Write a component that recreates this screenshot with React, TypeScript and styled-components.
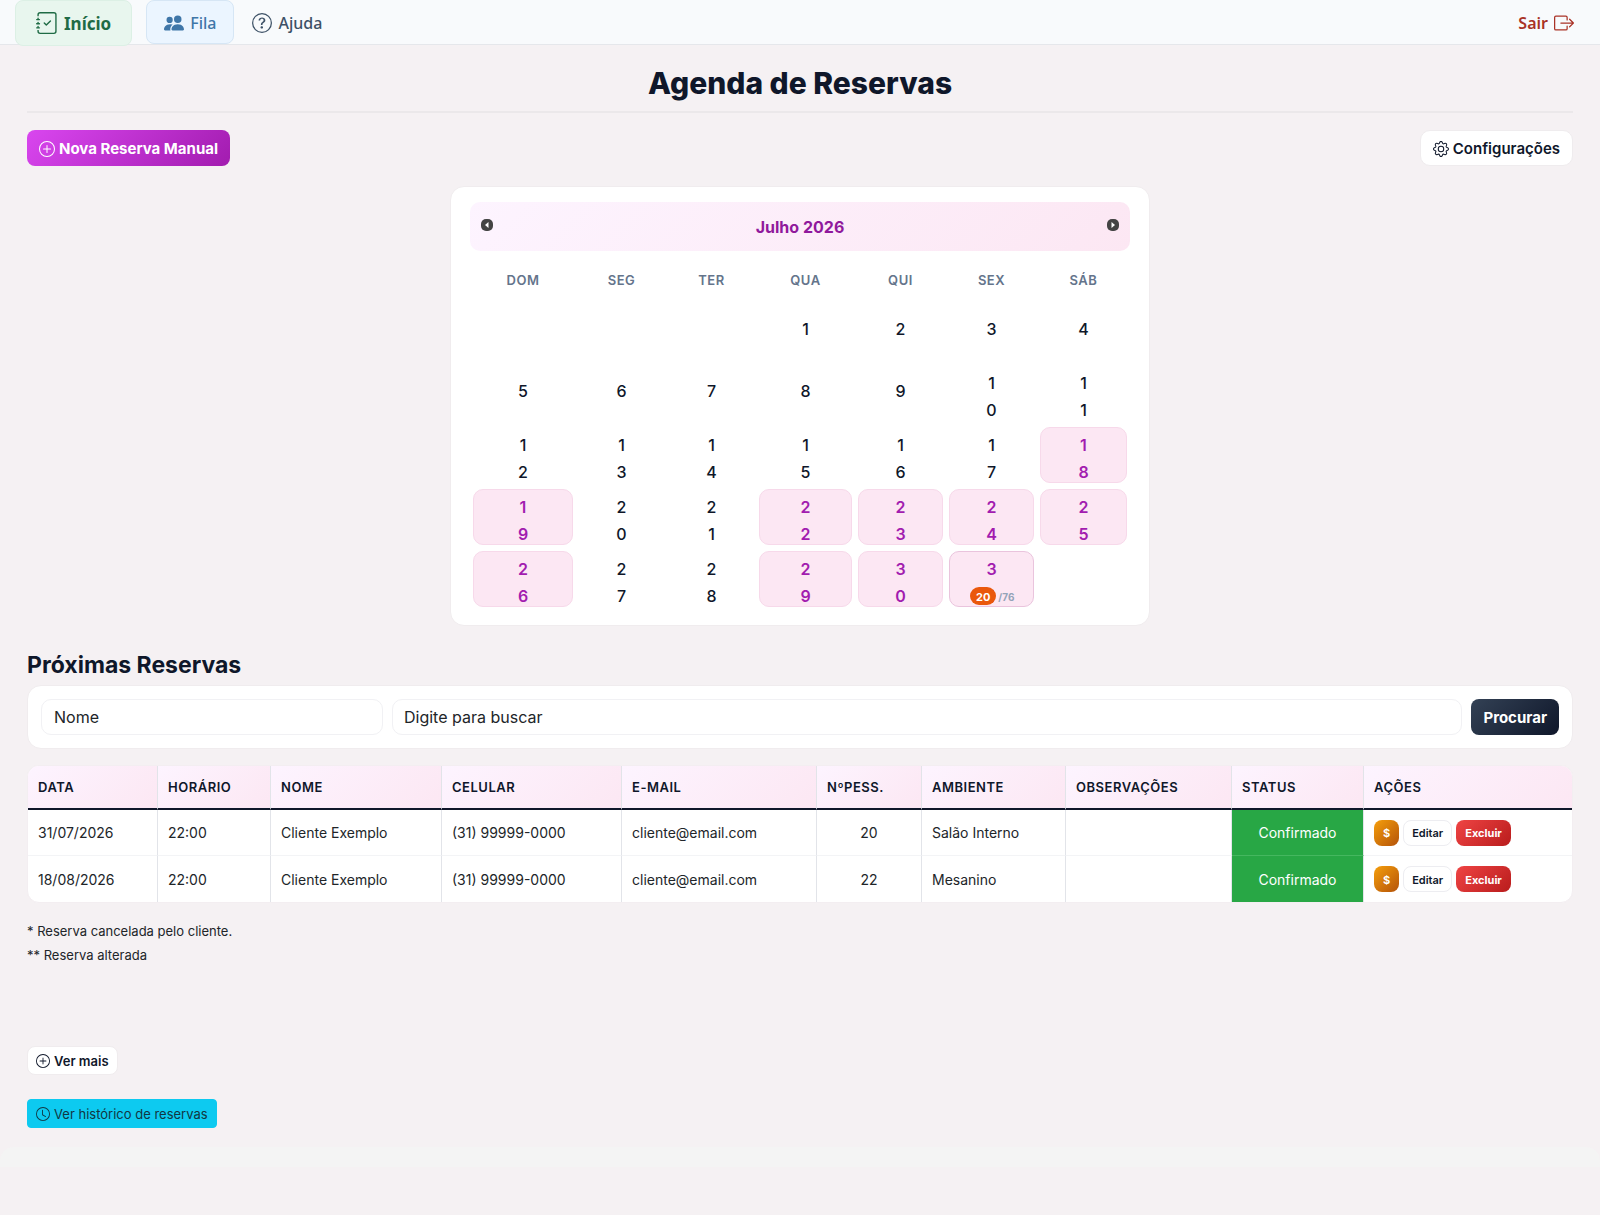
import React from "react";
import styled, { createGlobalStyle, css } from "styled-components";
import {
  BsJournalCheck,
  BsPeopleFill,
  BsQuestionCircle,
  BsBoxArrowRight,
  BsPlusCircle,
  BsGear,
  BsClock,
} from "react-icons/bs";

const GlobalStyle = createGlobalStyle`
  *, *::before, *::after { box-sizing: border-box; }
  body {
    margin: 0;
    background: #f5f1f3;
    color: #212529;
    font-family: Inter, "Liberation Sans", sans-serif;
    font-size: 16px;
  }
  button, input, select { font: inherit; }
  h1, h2, p { margin: 0; }
  svg { flex: none; }
`;

/* ---------- top navigation ---------- */

const Nav = styled.nav`
  display: flex;
  align-items: flex-start;
  height: 45px;
  padding: 0 26px 0 15px;
  background: #f8fafc;
  border-bottom: 1px solid #e5e7eb;
  font-family: "Noto Sans", "Open Sans", sans-serif;
`;

type LinkKind = "home" | "queue" | "plain" | "exit";

const linkKinds = {
  home: css`
    height: 46px;
    padding: 0 20px;
    margin-right: 14px;
    background: #e8f6ee;
    border: 1px solid #dcf0e5;
    border-radius: 8px;
    color: #1f6b45;
    font-size: 17px;
    font-weight: 700;
  `,
  queue: css`
    padding: 1px 17px 0;
    margin-right: 18px;
    background: #ebf5ff;
    border: 1px solid #d6e6f5;
    border-radius: 8px;
    color: #3f76a8;
  `,
  plain: css`
    color: #3d5166;
  `,
  exit: css`
    margin-left: auto;
    color: #a93226;
    font-weight: 600;
  `,
};

const NavLink = styled.a<{ $kind: LinkKind }>`
  display: flex;
  align-items: center;
  gap: 6px;
  height: 44px;
  padding-top: 1px;
  font-size: 16px;
  font-weight: 500;
  text-decoration: none;
  ${(p) => linkKinds[p.$kind]}
`;

/* ---------- page ---------- */

const Main = styled.main`
  padding: 0 27px;
`;

const Title = styled.h1`
  padding: 18px 0 8px;
  border-bottom: 2px solid #ebe8ea;
  color: #0f172a;
  font-size: 30px;
  line-height: 40px;
  font-weight: 800;
  text-align: center;
`;

const Toolbar = styled.div`
  display: flex;
  justify-content: space-between;
  margin: 17px 0 20px;
`;

const Button = styled.button<{ $tone: "primary" | "light" | "dark" }>`
  display: inline-flex;
  align-items: center;
  gap: 4px;
  height: 36px;
  padding: 1px 12px 0;
  border: 0;
  border-radius: 8px;
  font-size: 15px;
  font-weight: 700;
  white-space: nowrap;
  cursor: pointer;
  ${(p) =>
    p.$tone === "primary" &&
    css`
      background: linear-gradient(135deg, #d946ef, #a21caf);
      color: #fff;
    `}
  ${(p) =>
    p.$tone === "light" &&
    css`
      background: #fff;
      border: 1px solid #efecee;
      border-radius: 10px;
      color: #0f172a;
      font-weight: 600;
    `}
  ${(p) =>
    p.$tone === "dark" &&
    css`
      background: linear-gradient(135deg, #334155, #0f172a);
      color: #fff;
    `}
`;

/* ---------- calendar ---------- */

const CalendarCard = styled.section`
  width: 100%;
  max-width: 700px;
  margin: 0 auto;
  padding: 15px 19px;
  background: #fff;
  border: 1px solid #f0ecee;
  border-radius: 14px;
`;

const CalendarHeader = styled.header`
  display: flex;
  align-items: center;
  justify-content: space-between;
  height: 49px;
  padding: 0 10px;
  border-radius: 10px;
  background: linear-gradient(135deg, #fdf4ff, #fce7f3);
`;

const Month = styled.div`
  color: #90199c;
  font-size: 16px;
  line-height: 24px;
  font-weight: 700;
`;

const ArrowButton = styled.button`
  display: flex;
  padding: 0 0 4px;
  border: 0;
  background: none;
  cursor: pointer;
`;

const DayTable = styled.table`
  width: 100%;
  table-layout: fixed;
  border-collapse: collapse;

  th {
    height: 49px;
    padding: 8px 0 0;
    color: #64748b;
    font-size: 13px;
    line-height: 20px;
    font-weight: 600;
    letter-spacing: 0.04em;
    text-transform: uppercase;
  }
  td {
    height: 62px;
    padding: 3px;
  }
`;

const Day = styled.button<{ $twoLines: boolean; $today: boolean }>`
  position: relative;
  display: flex;
  justify-content: center;
  align-items: ${(p) => (p.$twoLines ? "flex-start" : "center")};
  width: 100%;
  height: 56px;
  padding: ${(p) => (p.$twoLines ? "4px 0 0" : "0 0 4px")};
  border: 1px solid #f7d9ea;
  border-radius: 10px;
  background: #fce7f3;
  color: #a21caf;
  line-height: 27px;
  font-weight: 600;
  cursor: pointer;
  ${(p) =>
    p.$today &&
    css`
      border-color: #eac4dd;
    `}
  &:disabled {
    border-color: transparent;
    background: none;
    color: #0f172a;
    font-weight: 500;
    cursor: default;
  }
`;

const Digits = styled.span`
  width: 12px;
  word-break: break-all;
  text-align: center;
`;

const Occupancy = styled.span`
  position: absolute;
  left: 20px;
  bottom: 1px;
  display: flex;
  align-items: flex-end;
  gap: 2px;
  color: #94a3b8;
  font-size: 10px;
  line-height: 16px;
  font-weight: 700;
`;

const OccupancyCount = styled.span`
  height: 18px;
  padding: 2px 6px 0;
  border-radius: 9px;
  background: #ea580c;
  color: #fff;
  font-size: 11px;
`;

/* ---------- bookings ---------- */

const SectionTitle = styled.h2`
  margin: 24px 0 5px;
  color: #0f172a;
  font-size: 23px;
  line-height: 30px;
  font-weight: 700;
`;

const SearchCard = styled.form`
  display: flex;
  gap: 9px;
  padding: 13px;
  background: #fff;
  border: 1px solid #f0ecee;
  border-radius: 14px;
`;

const fieldStyle = css`
  height: 36px;
  padding: 0 12px;
  border: 1px solid #f1f1f4;
  border-radius: 10px;
  background: #fff;
  color: #212529;
  font-size: 16px;
`;

const FieldSelect = styled.select`
  ${fieldStyle}
  appearance: none;
  flex: 0 0 342px;
`;

const SearchInput = styled.input`
  ${fieldStyle}
  flex: 1;
  min-width: 0;
  padding: 0 11px;
  &::placeholder {
    color: #212529;
    opacity: 1;
  }
`;

const BookingTable = styled.table`
  width: 100%;
  margin: 16px 0;
  table-layout: fixed;
  border-collapse: separate;
  border-spacing: 0;
  border: 1px solid #f3eef1;
  border-radius: 12px;
  overflow: hidden;
  background: #fff;

  th,
  td {
    padding: 0 10px;
    border-right: 1px solid #e2e4e9;
    text-align: left;
    white-space: nowrap;
  }
  th:last-child,
  td:last-child {
    border-right: 0;
  }
  th {
    height: 44px;
    border-bottom: 2px solid #0f172a;
    background: linear-gradient(135deg, #fdf4ff, #fce7f3);
    color: #0f172a;
    font-size: 13px;
    font-weight: 600;
    letter-spacing: 0.04em;
    text-transform: uppercase;
  }
  td {
    height: 46px;
    border-bottom: 1px solid #f3f4f6;
    font-size: 14px;
  }
  tr:last-child td {
    border-bottom: 0;
  }
  td.people {
    text-align: center;
  }
  td.status {
    border-bottom-color: #45b75f;
    background: #28a745;
    color: #fff;
    text-align: center;
  }
`;

const Actions = styled.div`
  display: flex;
  align-items: center;
  gap: 4px;
`;

const SmallButton = styled.button<{ $tone: "amber" | "light" | "red" }>`
  height: 26px;
  padding: 1px 9px 0;
  border: 0;
  border-radius: 8px;
  color: #fff;
  font-size: 11px;
  font-weight: 700;
  cursor: pointer;
  background: ${(p) =>
    p.$tone === "amber"
      ? "linear-gradient(135deg, #f59e0b, #b45309)"
      : p.$tone === "red"
        ? "linear-gradient(135deg, #ef4444, #b91c1c)"
        : "#fff"};
  ${(p) =>
    p.$tone === "light" &&
    css`
      border: 1px solid #ededf1;
      padding: 1px 8px 0;
      color: #0f172a;
      font-weight: 600;
    `}
`;

const Note = styled.p`
  color: #212529;
  font-size: 13px;
  line-height: 24px;
`;

const Links = styled.div`
  display: flex;
  flex-direction: column;
  align-items: flex-start;
  gap: 24px;
  margin: 79px 0 19px;
`;

const MoreButton = styled.button<{ $info?: boolean }>`
  display: inline-flex;
  align-items: center;
  gap: 4px;
  height: 29px;
  padding: 0 8px;
  border: 1px solid #f0ecee;
  border-radius: 8px;
  background: #fff;
  color: #0f172a;
  font-size: 13px;
  font-weight: 600;
  cursor: pointer;
  ${(p) =>
    p.$info &&
    css`
      border-color: #0dcaf0;
      border-radius: 4px;
      background: #0dcaf0;
      color: #123642;
      font-weight: 400;
    `}
`;

const Footer = styled.footer`
  height: 20px;
  border-radius: 14px 14px 0 0;
  background: #f4f4f4;
`;

/* ---------- data ---------- */

const weekdays = ["Dom", "Seg", "Ter", "Qua", "Qui", "Sex", "Sáb"];
const weekdayWidths = [106, 91, 89, 99, 91, 91, 93];
const openDays = [18, 19, 22, 23, 24, 25, 26, 29, 30, 31];
const today = 31;
const weeks: (number | null)[][] = [
  [null, null, null, 1, 2, 3, 4],
  [5, 6, 7, 8, 9, 10, 11],
  [12, 13, 14, 15, 16, 17, 18],
  [19, 20, 21, 22, 23, 24, 25],
  [26, 27, 28, 29, 30, 31, null],
];

const columns: [string, number][] = [
  ["Data", 130],
  ["Horário", 113],
  ["Nome", 171],
  ["Celular", 180],
  ["E-mail", 195],
  ["NºPess.", 105],
  ["Ambiente", 144],
  ["Observações", 166],
  ["Status", 132],
  ["Ações", 208],
];

const bookings = [
  { date: "31/07/2026", people: 20, room: "Salão Interno" },
  { date: "18/08/2026", people: 22, room: "Mesanino" },
];

const Arrow = ({ left }: { left?: boolean }) => (
  <svg width="14" height="14" viewBox="0 0 14 14" aria-hidden="true">
    <rect x="1" y="1" width="12" height="12" rx="5" fill="#444" />
    <path d={left ? "M8.5 4v6L5 7z" : "M5.5 4v6L9 7z"} fill="#fff" />
  </svg>
);

export default function App() {
  return (
    <>
      <GlobalStyle />
      <Nav>
        <NavLink href="#inicio" $kind="home">
          <BsJournalCheck size={22} /> Início
        </NavLink>
        <NavLink href="#fila" $kind="queue">
          <BsPeopleFill size={20} /> Fila
        </NavLink>
        <NavLink href="#ajuda" $kind="plain">
          <BsQuestionCircle size={20} /> Ajuda
        </NavLink>
        <NavLink href="#sair" $kind="exit">
          Sair <BsBoxArrowRight size={20} />
        </NavLink>
      </Nav>
      <Main>
        <Title>Agenda de Reservas</Title>
        <Toolbar>
          <Button type="button" $tone="primary">
            <BsPlusCircle size={16} /> Nova Reserva Manual
          </Button>
          <Button type="button" $tone="light">
            <BsGear size={16} /> Configurações
          </Button>
        </Toolbar>

        <CalendarCard>
          <CalendarHeader>
            <ArrowButton type="button" aria-label="Mês anterior">
              <Arrow left />
            </ArrowButton>
            <Month>Julho 2026</Month>
            <ArrowButton type="button" aria-label="Próximo mês">
              <Arrow />
            </ArrowButton>
          </CalendarHeader>
          <DayTable>
            <colgroup>
              {weekdayWidths.map((w, i) => (
                <col key={i} width={w} />
              ))}
            </colgroup>
            <thead>
              <tr>
                {weekdays.map((d) => (
                  <th key={d} scope="col">{d}</th>
                ))}
              </tr>
            </thead>
            <tbody>
              {weeks.map((week, i) => (
                <tr key={i}>
                  {week.map((day, j) => (
                    <td key={j}>
                      {day && (
                        <Day
                          type="button"
                          disabled={!openDays.includes(day)}
                          $twoLines={day > 9}
                          $today={day === today}
                        >
                          <Digits>{day}</Digits>
                          {day === today && (
                            <Occupancy>
                              <OccupancyCount>20</OccupancyCount>/76
                            </Occupancy>
                          )}
                        </Day>
                      )}
                    </td>
                  ))}
                </tr>
              ))}
            </tbody>
          </DayTable>
        </CalendarCard>

        <SectionTitle>Próximas Reservas</SectionTitle>
        <SearchCard onSubmit={(e) => e.preventDefault()}>
          <FieldSelect aria-label="Campo de busca">
            <option>Nome</option>
          </FieldSelect>
          <SearchInput type="text" aria-label="Texto da busca" placeholder="Digite para buscar" />
          <Button type="submit" $tone="dark">Procurar</Button>
        </SearchCard>

        <BookingTable>
          <colgroup>
            {columns.map(([name, w]) => (
              <col key={name} width={w} />
            ))}
          </colgroup>
          <thead>
            <tr>
              {columns.map(([name]) => (
                <th key={name} scope="col">{name}</th>
              ))}
            </tr>
          </thead>
          <tbody>
            {bookings.map((b) => (
              <tr key={b.date}>
                <td>{b.date}</td>
                <td>22:00</td>
                <td>Cliente Exemplo</td>
                <td>(31) 99999-0000</td>
                <td>cliente@email.com</td>
                <td className="people">{b.people}</td>
                <td>{b.room}</td>
                <td />
                <td className="status">Confirmado</td>
                <td>
                  <Actions>
                    <SmallButton type="button" $tone="amber">$</SmallButton>
                    <SmallButton type="button" $tone="light">Editar</SmallButton>
                    <SmallButton type="button" $tone="red">Excluir</SmallButton>
                  </Actions>
                </td>
              </tr>
            ))}
          </tbody>
        </BookingTable>

        <Note>* Reserva cancelada pelo cliente.</Note>
        <Note>** Reserva alterada</Note>

        <Links>
          <MoreButton type="button">
            <BsPlusCircle size={14} /> Ver mais
          </MoreButton>
          <MoreButton type="button" $info>
            <BsClock size={14} /> Ver histórico de reservas
          </MoreButton>
        </Links>
      </Main>
      <Footer />
    </>
  );
}
